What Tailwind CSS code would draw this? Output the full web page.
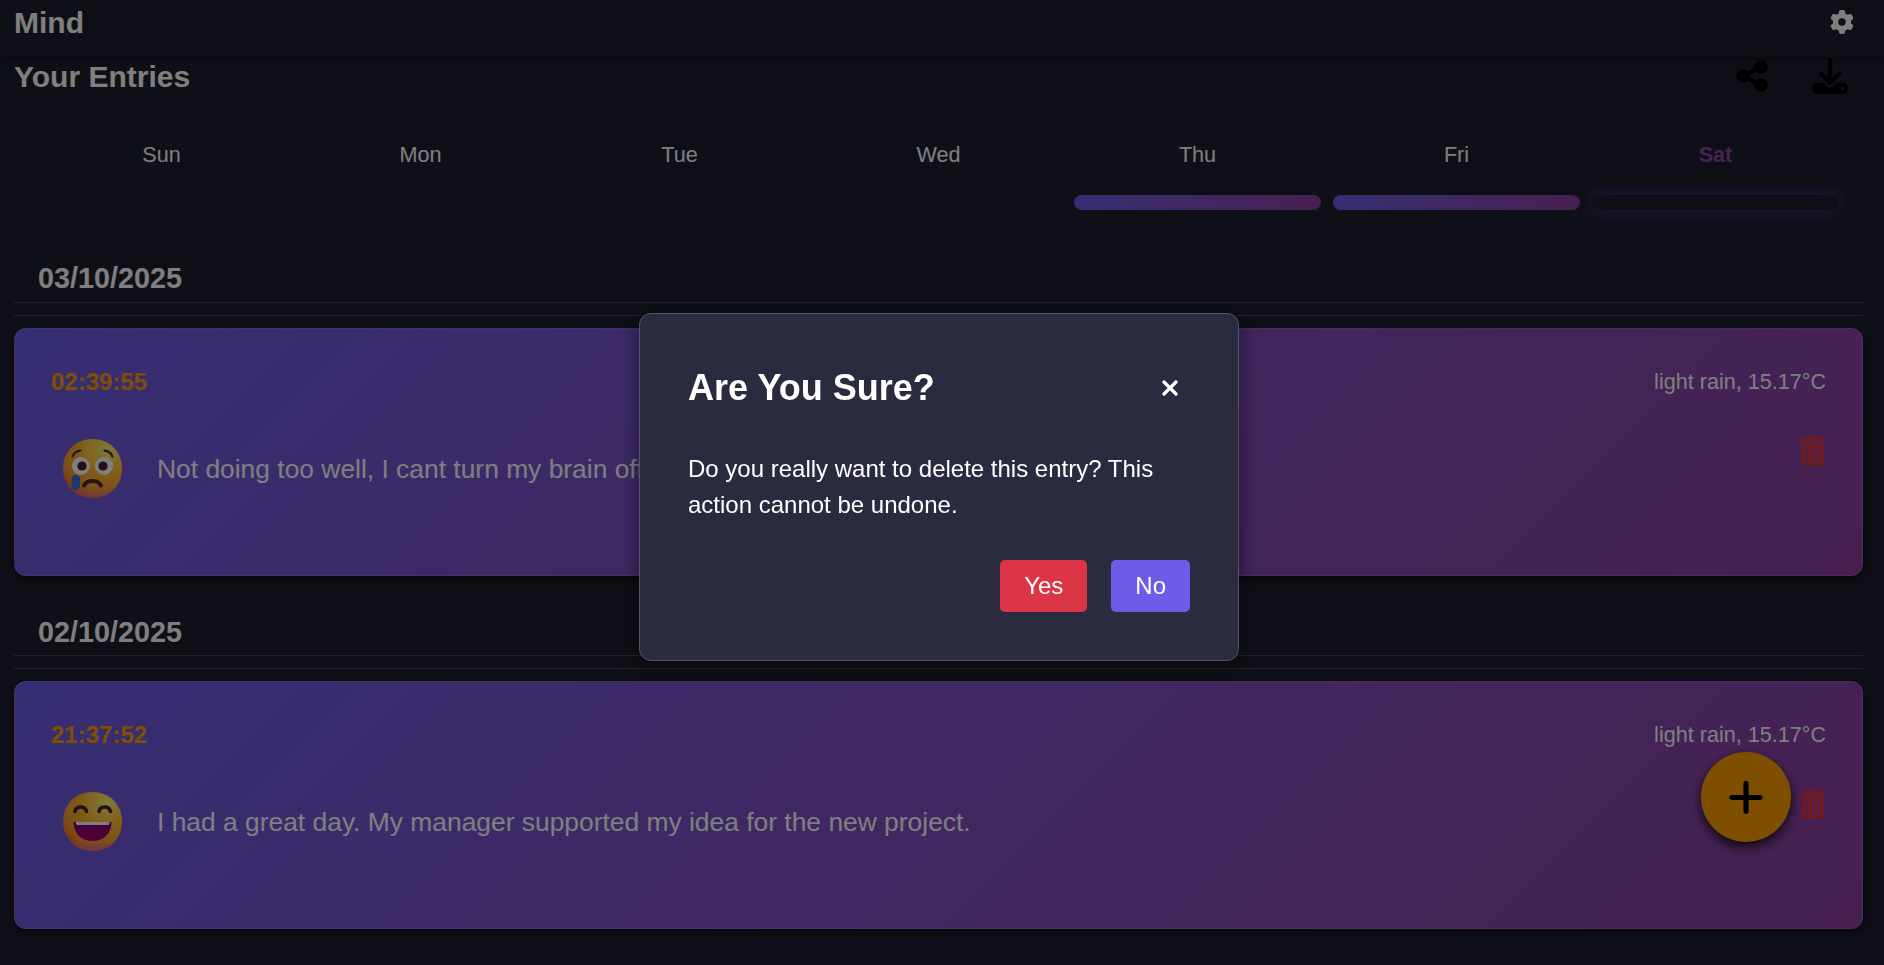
<!DOCTYPE html>
<html lang="en">
<head>
<meta charset="utf-8">
<title>Mind</title>
<script src="https://cdn.jsdelivr.net/npm/@tailwindcss/browser@4"></script>
</head>
<body class="h-[965px] overflow-hidden bg-[#1e1e2e] font-['Liberation_Sans',Arial,sans-serif] text-white">
<header class="relative flex h-[57px] items-start justify-between pl-3.5 pr-[30px] shadow-[0_2px_6px_rgba(0,0,0,0.5)]">
  <h1 class="pt-[5px] text-[30px] leading-[35px] font-bold">Mind</h1>
  <svg class="mt-2.5 size-6 fill-white" viewBox="0 0 512 512"><path d="M495.9 166.6c3.2 8.7 .5 18.4-6.4 24.6l-43.3 39.4c1.1 8.3 1.7 16.8 1.7 25.4s-.6 17.1-1.7 25.4l43.3 39.4c6.9 6.2 9.6 15.9 6.4 24.6c-4.4 11.9-9.7 23.3-15.8 34.3l-4.7 8.1c-6.6 11-14 21.4-22.1 31.2c-5.9 7.2-15.7 9.6-24.5 6.8l-55.7-17.7c-13.4 10.3-28.2 18.9-44 25.4l-12.5 57.1c-2 9.1-9 16.3-18.2 17.8c-13.8 2.3-28 3.5-42.5 3.5s-28.7-1.2-42.5-3.5c-9.2-1.5-16.2-8.7-18.2-17.8l-12.5-57.1c-15.8-6.5-30.6-15.1-44-25.4L83.1 425.9c-8.8 2.8-18.6 .3-24.5-6.8c-8.1-9.8-15.5-20.2-22.1-31.2l-4.7-8.1c-6.1-11-11.4-22.4-15.8-34.3c-3.2-8.7-.5-18.4 6.4-24.6l43.3-39.4C64.6 273.1 64 264.6 64 256s.6-17.1 1.7-25.4L22.4 191.2c-6.9-6.2-9.6-15.9-6.4-24.6c4.4-11.9 9.7-23.3 15.8-34.3l4.7-8.1c6.6-11 14-21.4 22.1-31.2c5.9-7.2 15.7-9.6 24.5-6.8l55.7 17.7c13.4-10.3 28.2-18.9 44-25.4l12.5-57.1c2-9.1 9-16.3 18.2-17.8C227.3 1.2 241.5 0 256 0s28.7 1.2 42.5 3.5c9.2 1.5 16.2 8.7 18.2 17.8l12.5 57.1c15.8 6.5 30.6 15.1 44 25.4l55.7-17.7c8.8-2.8 18.6-.3 24.5 6.8c8.1 9.8 15.5 20.2 22.1 31.2l4.7 8.1c6.1 11 11.4 22.4 15.8 34.3zM256 336a80 80 0 1 0 0-160 80 80 0 1 0 0 160z"/></svg>
</header>

<main class="pl-3.5 pr-[21px]">
  <div class="flex h-[72px] items-start justify-between pr-[15px]">
    <h2 class="pt-0.5 text-[30px] leading-[35px] font-bold">Your Entries</h2>
    <div class="flex items-center gap-[44px] pt-px">
      <svg class="h-9 w-8 fill-black" viewBox="0 0 448 512"><path d="M352 224c53 0 96-43 96-96s-43-96-96-96s-96 43-96 96c0 4 .2 8 .7 11.9l-94.1 47C145.4 170.2 121.9 160 96 160c-53 0-96 43-96 96s43 96 96 96c25.9 0 49.4-10.2 66.6-26.9l94.1 47c-.5 3.9-.7 7.8-.7 11.9c0 53 43 96 96 96s96-43 96-96s-43-96-96-96c-25.9 0-49.4 10.2-66.6 26.9l-94.1-47c.5-3.9 .7-7.8 .7-11.9s-.2-8-.7-11.9l94.1-47C302.6 213.8 326.1 224 352 224z"/></svg>
      <svg class="size-9 fill-black" viewBox="0 0 512 512"><path d="M288 32c0-17.7-14.3-32-32-32s-32 14.3-32 32V274.7l-73.4-73.4c-12.5-12.5-32.8-12.5-45.3 0s-12.5 32.8 0 45.3l128 128c12.5 12.5 32.8 12.5 45.3 0l128-128c12.5-12.5 12.5-32.8 0-45.3s-32.8-12.5-45.3 0L288 274.7V32zM64 352c-35.3 0-64 28.7-64 64v32c0 35.3 28.7 64 64 64H448c35.3 0 64-28.7 64-64V416c0-35.3-28.7-64-64-64H346.5l-45.3 45.3c-25 25-65.5 25-90.5 0L165.5 352H64zm368 56a24 24 0 1 1 0 48 24 24 0 1 1 0-48z"/></svg>
    </div>
  </div>

  <div class="grid h-[126px] grid-cols-7 gap-x-3 px-6 pt-px text-center text-[21.6px] leading-[50px]">
    <div>Sun</div>
    <div>Mon</div>
    <div>Tue</div>
    <div>Wed</div>
    <div>Thu<div class="mt-[15px] h-[15px] rounded-full bg-linear-to-r from-[#6c5ce7] to-[#8e3fa0]"></div></div>
    <div>Fri<div class="mt-[15px] h-[15px] rounded-full bg-linear-to-r from-[#6c5ce7] to-[#8e3fa0]"></div></div>
    <div class="font-bold text-[#8e44ad]">Sat<div class="mt-[15px] h-[15px] rounded-full bg-[#1e1e2e] shadow-[0_0_15px_rgba(108,92,231,0.5)]"></div></div>
  </div>

  <section class="pb-[39px]">
    <h3 class="h-12 border-b border-[#484848] pl-6 pt-[6px] text-[28.8px] leading-[34px] font-bold">03/10/2025</h3>
    <div class="mt-3 mb-3 h-px bg-[#484848]"></div>
    <article class="h-[248px] rounded-xl border border-white/10 bg-linear-135 from-[#6c5ce7] to-[#8e3fa0] px-9 pt-[37px] shadow-[0_4px_10px_rgba(0,0,0,0.5)]">
      <div class="flex justify-between leading-[32px]">
        <span class="text-[24px] font-bold text-[#ff9f00]">02:39:55</span>
        <span class="text-[21.6px]">light rain, 15.17°C</span>
      </div>
      <div class="flex items-start pl-3 pt-[41px]">
        <svg class="size-[59px]" viewBox="0 0 59 59">
          <defs><radialGradient id="face" cx=".75" cy=".18" r=".95"><stop offset="0" stop-color="#fff478"/><stop offset=".45" stop-color="#ffb92e"/><stop offset=".8" stop-color="#f59a30"/><stop offset="1" stop-color="#e0602f"/></radialGradient><linearGradient id="rim" x1="0" y1="0" x2="0" y2="1"><stop offset=".82" stop-color="#f0709a" stop-opacity="0"/><stop offset="1" stop-color="#e0609a" stop-opacity=".8"/></linearGradient><linearGradient id="mouth" x1="0" y1="0" x2="0" y2="1"><stop stop-color="#7a0080"/><stop offset="1" stop-color="#b00060"/></linearGradient></defs>
          <path fill="url(#face)" d="M29.500 0C46 0 59 12 59 29.500S46 59 29.500 59 0 47 0 29.500 13 0 29.500 0z"/>
          <path fill="url(#rim)" d="M29.500 0C46 0 59 12 59 29.500S46 59 29.500 59 0 47 0 29.500 13 0 29.500 0z"/>
          <circle cx="18" cy="27" r="9" fill="#fff"/><circle cx="41" cy="27" r="9" fill="#fff"/>
          <circle cx="19" cy="27" r="4.600" fill="#43202e"/><circle cx="40" cy="27" r="4.600" fill="#43202e"/>
          <path d="M9.500 17.500c1.500-3.500 4.500-5.500 8-5.800M49.500 17.500c-1.500-3.500-4.500-5.500-8-5.800" fill="none" stroke="#50292f" stroke-width="2.200" stroke-linecap="round"/>
          <path d="M21 46.500c3-6 14-6 17 0" fill="none" stroke="#50292f" stroke-width="4" stroke-linecap="round"/>
          <rect x="8.500" y="36" width="8.500" height="15" rx="4.200" fill="#3d6be6"/>
        </svg>
        <p class="pl-[35px] pt-[15px] text-[26.4px] leading-[30px]">Not doing too well, I cant turn my brain off.</p>
        <svg class="ml-auto -mt-[3px] h-[30px] w-[26px] fill-[#dc3545]" viewBox="0 0 448 512"><path d="M135.2 17.7C140.6 6.8 151.7 0 163.8 0H284.2c12.1 0 23.2 6.8 28.6 17.7L320 32h96c17.7 0 32 14.3 32 32s-14.3 32-32 32H32C14.3 96 0 81.7 0 64S14.3 32 32 32h96l7.2-14.3zM32 128H416V448c0 35.3-28.7 64-64 64H96c-35.3 0-64-28.7-64-64V128zm96 64c-8.8 0-16 7.2-16 16V432c0 8.8 7.2 16 16 16s16-7.2 16-16V208c0-8.800-7.200-16-16-16zm96 0c-8.800 0-16 7.200-16 16V432c0 8.800 7.200 16 16 16s16-7.200 16-16V208c0-8.800-7.200-16-16-16zm96 0c-8.800 0-16 7.200-16 16V432c0 8.800 7.200 16 16 16s16-7.200 16-16V208c0-8.800-7.200-16-16-16z"/></svg>
      </div>
    </article>
  </section>

  <section>
    <h3 class="h-[41px] border-b border-[#484848] pl-6 text-[28.8px] leading-[34px] font-bold">02/10/2025</h3>
    <div class="mt-3 mb-3 h-px bg-[#484848]"></div>
    <article class="h-[248px] rounded-xl border border-white/10 bg-linear-135 from-[#6c5ce7] to-[#8e3fa0] px-9 pt-[37px] shadow-[0_4px_10px_rgba(0,0,0,0.5)]">
      <div class="flex justify-between leading-[32px]">
        <span class="text-[24px] font-bold text-[#ff9f00]">21:37:52</span>
        <span class="text-[21.6px]">light rain, 15.17°C</span>
      </div>
      <div class="flex items-start pl-3 pt-[41px]">
        <svg class="size-[59px]" viewBox="0 0 59 59">
          <path fill="url(#face)" d="M29.500 0C46 0 59 12 59 29.500S46 59 29.500 59 0 47 0 29.500 13 0 29.500 0z"/>
          <path fill="url(#rim)" d="M29.500 0C46 0 59 12 59 29.500S46 59 29.500 59 0 47 0 29.500 13 0 29.500 0z"/>
          <path d="M12 19.500c1-6 10-6 11.500 0M36 19.500c1-6 10-6 11.500 0" fill="none" stroke="#43202e" stroke-width="3.600" stroke-linecap="round"/>
          <path d="M10.500 30h38c0 12-8 19-19 19s-19-7-19-19z" fill="url(#mouth)"/>
          <path d="M13 30h33.500v1.500q0 1.500-1.500 1.500h-30.500q-1.500 0-1.500-1.500z" fill="#fff"/>
        </svg>
        <p class="pl-[35px] pt-[15px] text-[26.4px] leading-[30px]">I had a great day. My manager supported my idea for the new project.</p>
        <svg class="ml-auto -mt-[3px] h-[30px] w-[26px] fill-[#dc3545]" viewBox="0 0 448 512"><path d="M135.2 17.7C140.6 6.8 151.7 0 163.8 0H284.2c12.1 0 23.2 6.8 28.6 17.7L320 32h96c17.7 0 32 14.3 32 32s-14.3 32-32 32H32C14.3 96 0 81.7 0 64S14.3 32 32 32h96l7.2-14.3zM32 128H416V448c0 35.3-28.7 64-64 64H96c-35.3 0-64-28.7-64-64V128zm96 64c-8.8 0-16 7.2-16 16V432c0 8.8 7.2 16 16 16s16-7.2 16-16V208c0-8.800-7.200-16-16-16zm96 0c-8.800 0-16 7.200-16 16V432c0 8.800 7.200 16 16 16s16-7.200 16-16V208c0-8.800-7.200-16-16-16zm96 0c-8.800 0-16 7.200-16 16V432c0 8.800 7.200 16 16 16s16-7.200 16-16V208c0-8.800-7.200-16-16-16z"/></svg>
      </div>
    </article>
  </section>
</main>

<button class="fixed right-[93px] bottom-[123px] flex size-[90px] items-center justify-center rounded-full bg-[#ff9f00] shadow-[0_5px_12px_rgba(0,0,0,0.8)]">
  <svg class="h-[41px] w-9 fill-black" viewBox="0 0 448 512"><path d="M256 80c0-17.7-14.3-32-32-32s-32 14.3-32 32V224H48c-17.7 0-32 14.3-32 32s14.3 32 32 32H192V432c0 17.7 14.3 32 32 32s32-14.3 32-32V288H400c17.7 0 32-14.3 32-32s-14.3-32-32-32H256V80z"/></svg>
</button>

<div class="fixed inset-0 flex items-start justify-center bg-black/50 pt-[313px] pr-[6px]">
  <div class="h-[348px] w-[600px] rounded-xl border border-[#55546a] bg-[#2b2b40] px-12 pt-[53px] shadow-[0_4px_20px_rgba(0,0,0,0.5)]">
    <div class="flex items-center justify-between">
      <h2 class="text-[36px] leading-[42px] font-bold">Are You Sure?</h2>
      <button class="pr-3"><svg class="size-4 stroke-white" viewBox="0 0 16 16" fill="none" stroke-width="3.200" stroke-linecap="round"><path d="M2 2l12 12M14 2L2 14"/></svg></button>
    </div>
    <p class="mt-[42px] text-[24px] leading-9">Do you really want to delete this entry? This action cannot be undone.</p>
    <div class="mt-[37px] flex justify-end gap-6 text-[24px] leading-7">
      <button class="rounded-[5px] bg-[#dc3545] px-6 py-3">Yes</button>
      <button class="rounded-[5px] bg-[#6c5ce7] px-6 py-3">No</button>
    </div>
  </div>
</div>
</body>
</html>
